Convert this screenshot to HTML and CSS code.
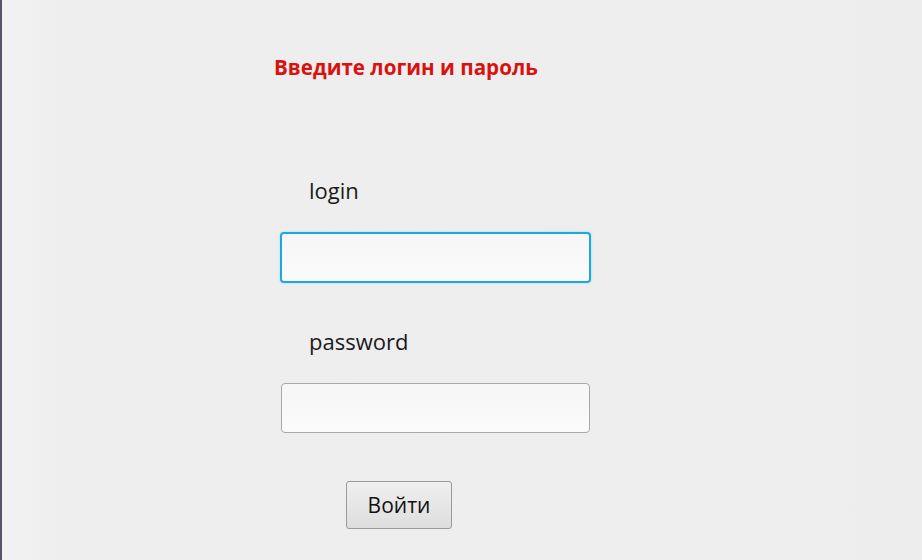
FILE: index.html
```html
<!DOCTYPE html>
<html lang="ru">
<head>
    <meta charset="UTF-8">
    <meta name="viewport" content="width=device-width, initial-scale=1.0">
    <title>Вход</title>
    <link rel="stylesheet" href="styles.css">
</head>
<body>
    <div class="window">
        <form class="login-form">
            <h1 class="title">Введите логин и пароль</h1>

            <label class="field-label" for="login">login</label>
            <input class="field field-focused" type="text" id="login" name="login">

            <label class="field-label field-label-second" for="password">password</label>
            <input class="field" type="password" id="password" name="password">

            <button class="btn-enter" type="submit">Войти</button>
        </form>
    </div>
</body>
</html>
```

FILE: styles.css
```css
html, body {
    margin: 0;
    padding: 0;
    height: 100%;
}
body {
    font-family: "Open Sans", "DejaVu Sans", sans-serif;
    background-color: #efeeef;
}
.window {
    height: 100%;
    box-sizing: border-box;
    border-left: 2px solid #55556a;
    background: linear-gradient(to right, #f2f2f4, #eeeeee 60px, #eeedee);
}
.login-form {
    display: flex;
    flex-direction: column;
    align-items: flex-start;
    padding-top: 53px;
    padding-left: 272px;
}
.title {
    margin: 0;
    font-size: 20.6px;
    font-weight: bold;
    color: #d8120f;
}
.field-label {
    margin-top: 94px;
    margin-left: 35px;
    font-size: 22px;
    color: #1a1a1a;
}
.field-label-second {
    margin-top: 43px;
}
.field {
    margin-top: 27px;
    margin-left: 7px;
    width: 309px;
    height: 50px;
    box-sizing: border-box;
    border: 1px solid #a9a9a9;
    border-radius: 4px;
    background: linear-gradient(#f6f6f7, #fbfbfb);
    font-size: 18px;
    outline: none;
}
.field-focused {
    border: 2px solid #1ba7df;
    box-shadow: 0 0 2px #8ad3f0;
    margin-left: 6px;
    width: 311px;
    height: 51px;
}
.btn-enter {
    margin-top: 48px;
    margin-left: 72px;
    width: 106px;
    height: 48px;
    font-family: inherit;
    font-size: 21px;
    color: #111;
    border: 1px solid #9a9a9a;
    border-radius: 3px;
    background: linear-gradient(#efefef, #dedede);
    cursor: pointer;
}
```
